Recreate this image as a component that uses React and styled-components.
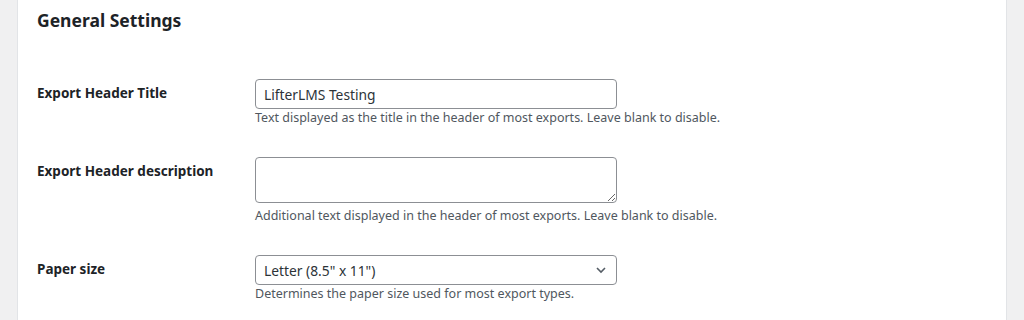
import React from "react";
import styled, { createGlobalStyle } from "styled-components";

const Global = createGlobalStyle`
  html, body { margin: 0; padding: 0; }
  body {
    background: #f0f0f1;
    font-family: "Noto Sans", "Open Sans", sans-serif;
    color: #1d2327;
    -webkit-font-smoothing: antialiased;
  }
`;

const Card = styled.div`
  margin-left: 17px;
  width: 990px;
  box-sizing: border-box;
  min-height: 320px;
  background: #fff;
  border-left: 1px solid #e2e4e7;
  border-right: 1px solid #e2e4e7;
  padding: 9px 19px 0;
`;

const Title = styled.h2`
  margin: 0;
  font-size: 17.5px;
  line-height: 22px;
  font-weight: 700;
  color: #1d2327;
`;

const Table = styled.div`
  margin-top: 33px;
  display: flex;
  flex-direction: column;
`;

const Row = styled.div`
  display: grid;
  grid-template-columns: 218px 1fr;
  padding: 15px 0;
`;

const Label = styled.label`
  padding-top: 5px;
  font-size: 13.5px;
  line-height: 18px;
  font-weight: 700;
  color: #1d2327;
`;

const Field = styled.div`
  display: flex;
  flex-direction: column;
  align-items: flex-start;
`;

const fieldBase = `
  box-sizing: border-box;
  width: 362px;
  border: 1px solid #8c8f94;
  border-radius: 4px;
  background: #fff;
  font-family: "Noto Sans", "Open Sans", sans-serif;
  font-size: 13.8px;
  color: #2c3338;
  outline: none;
  margin: 0;
`;

const TextInput = styled.input`
  ${fieldBase}
  height: 30px;
  padding: 0 8px;
`;

const TextArea = styled.textarea`
  ${fieldBase}
  display: block;
  height: 46px;
  padding: 2px 8px;
  margin-bottom: 4px;
  resize: vertical;
`;

const SelectWrap = styled.div`
  position: relative;
  width: 362px;
`;

const Select = styled.select`
  ${fieldBase}
  appearance: none;
  -webkit-appearance: none;
  height: 30px;
  padding: 0 24px 0 8px;
  display: block;
`;

const Chevron = styled.svg`
  position: absolute;
  right: 8px;
  top: 7px;
  width: 16px;
  height: 16px;
  pointer-events: none;
`;

const Desc = styled.p`
  margin: 0;
  font-size: 12.5px;
  line-height: 18px;
  color: #50575e;
`;

export default function App() {
  return (
    <>
      <Global />
      <Card>
        <Title>General Settings</Title>
        <Table>
          <Row>
            <Label>Export Header Title</Label>
            <Field>
              <TextInput defaultValue="LifterLMS Testing" />
              <Desc>Text displayed as the title in the header of most exports. Leave blank to disable.</Desc>
            </Field>
          </Row>
          <Row>
            <Label>Export Header description</Label>
            <Field>
              <TextArea />
              <Desc>Additional text displayed in the header of most exports. Leave blank to disable.</Desc>
            </Field>
          </Row>
          <Row>
            <Label>Paper size</Label>
            <Field>
              <SelectWrap>
                <Select defaultValue="letter">
                  <option value="letter">Letter (8.5" x 11")</option>
                  <option value="a4">A4 (210mm x 297mm)</option>
                </Select>
                <Chevron viewBox="0 0 20 20">
                  <path d="M5 7.5l5 5 5-5" fill="none" stroke="#555d66" strokeWidth="2" />
                </Chevron>
              </SelectWrap>
              <Desc>Determines the paper size used for most export types.</Desc>
            </Field>
          </Row>
        </Table>
      </Card>
    </>
  );
}
